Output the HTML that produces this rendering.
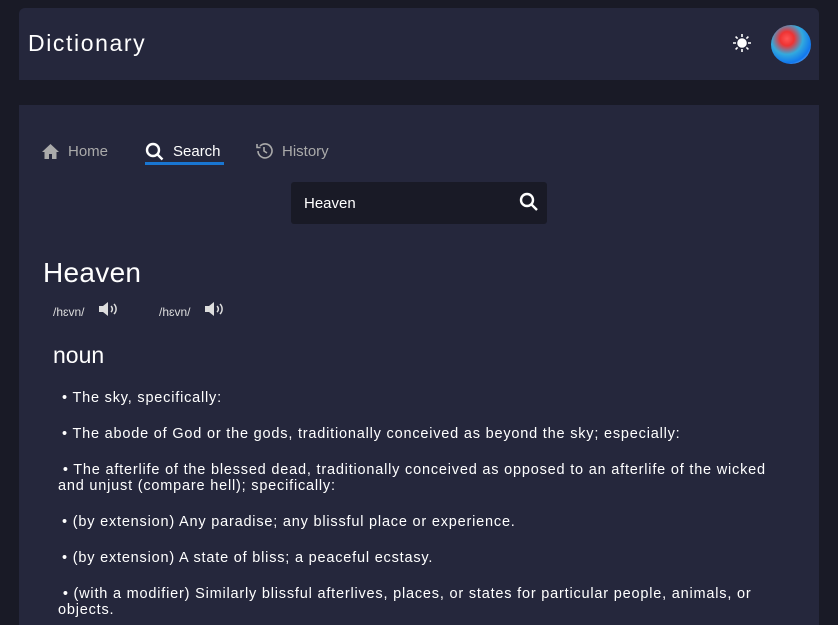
<!DOCTYPE html><html><head><style>
body{margin:0;background:#191a26;width:838px;height:616px;overflow:hidden;font-family:"Liberation Sans",sans-serif;color:#fff}
.hdr{position:absolute;left:19px;top:8px;width:800px;height:72px;background:#25273c;border-radius:6px 6px 0 0}
.hdr h1{position:absolute;left:9px;top:22px;margin:0;font-size:23px;font-weight:normal;letter-spacing:1.6px}
.av{position:absolute;left:752px;top:17px;width:40px;height:39px;border-radius:50%;background:radial-gradient(circle at 40% 35%,#f55 0,#e33 20%,#3ad 45%,#17e 70%,#fff 100%)}
.main{position:absolute;left:19px;top:105px;width:800px;height:520px;background:#25273c}
.tab{position:absolute;top:36px;height:20px;font-size:15px;color:#aaa;display:flex;align-items:center;gap:9px}
.srch{position:absolute;left:272px;top:77px;width:256px;height:42px;background:#191a26;border-radius:3px}
.srch span{position:absolute;left:13px;top:13px;font-size:15px}
.li{position:absolute;left:43px;font-size:14.5px;letter-spacing:.8px;line-height:16px;width:730px}
</style></head><body>
<div class="hdr"><h1>Dictionary</h1>
<svg style="position:absolute;left:713px;top:25px" width="20" height="20" viewBox="0 0 20 20" stroke="#fff" stroke-width="1.6"><circle cx="10" cy="10" r="4" fill="#fff"/><path d="M10 1v3M10 16v3M1 10h3M16 10h3M3.6 3.6l2 2M14.4 14.4l2 2M3.6 16.4l2-2M14.4 5.6l2-2"/></svg>
<div class="av"></div></div>
<div class="main">
<div class="tab" style="left:23px"><svg width="17" height="15" viewBox="0 0 17 15"><path d="M8.5 0L0 8h2.5v7h4.5v-5h3v5h4.5V8H17z" fill="#aaa"/></svg>Home</div>
<div class="tab" style="left:126px;color:#fff"><svg width="19" height="19" viewBox="0 0 19 19" fill="none" stroke="#fff" stroke-width="2.4"><circle cx="8" cy="8" r="6"/><path d="M12.5 12.5l5 5"/></svg>Search</div>
<div style="position:absolute;left:126px;top:57px;width:79px;height:3px;background:#1976d2"></div>
<div class="tab" style="left:236px"><svg width="18" height="18" viewBox="0 0 18 18" fill="none" stroke="#aaa" stroke-width="1.6"><path d="M3 9a7 7 0 1 0 2-5M2 2v3.5h3.5M9 5v4l3 2"/></svg>History</div>
<div class="srch"><span>Heaven</span><svg style="position:absolute;left:228px;top:10px" width="20" height="20" viewBox="0 0 20 20" fill="none" stroke="#fff" stroke-width="2.4"><circle cx="8" cy="8" r="6"/><path d="M12.5 12.5l5.5 5.5"/></svg></div>
</div>
<div style="position:absolute;left:43px;top:257px;font-size:28px;letter-spacing:.3px">Heaven</div>
<div style="position:absolute;left:53px;top:305px;font-size:12px;color:#ddd">/hɛvn/</div>
<div style="position:absolute;left:159px;top:305px;font-size:12px;color:#ddd">/hɛvn/</div>
<svg style="position:absolute;left:99px;top:301px" width="21" height="16" viewBox="0 0 21 16"><path d="M0 5h4l5-4v14l-5-4H0z" fill="#ddd"/><path d="M12 5a4 4 0 0 1 0 6M15 3a7 7 0 0 1 0 10" stroke="#ddd" stroke-width="1.5" fill="none"/></svg>
<svg style="position:absolute;left:205px;top:301px" width="21" height="16" viewBox="0 0 21 16"><path d="M0 5h4l5-4v14l-5-4H0z" fill="#ddd"/><path d="M12 5a4 4 0 0 1 0 6M15 3a7 7 0 0 1 0 10" stroke="#ddd" stroke-width="1.5" fill="none"/></svg>
<div style="position:absolute;left:53px;top:342px;font-size:23px">noun</div>
<div class="li" style="top:390px;left:62px">• The sky, specifically:</div>
<div class="li" style="top:426px;left:62px">• The abode of God or the gods, traditionally conceived as beyond the sky; especially:</div>
<div class="li" style="top:462px;left:58px">&nbsp;• The afterlife of the blessed dead, traditionally conceived as opposed to an afterlife of the wicked<br>and unjust (compare hell); specifically:</div>
<div class="li" style="top:514px;left:62px">• (by extension) Any paradise; any blissful place or experience.</div>
<div class="li" style="top:550px;left:62px">• (by extension) A state of bliss; a peaceful ecstasy.</div>
<div class="li" style="top:586px;left:58px">&nbsp;• (with a modifier) Similarly blissful afterlives, places, or states for particular people, animals, or<br>objects.</div>
</body></html>
